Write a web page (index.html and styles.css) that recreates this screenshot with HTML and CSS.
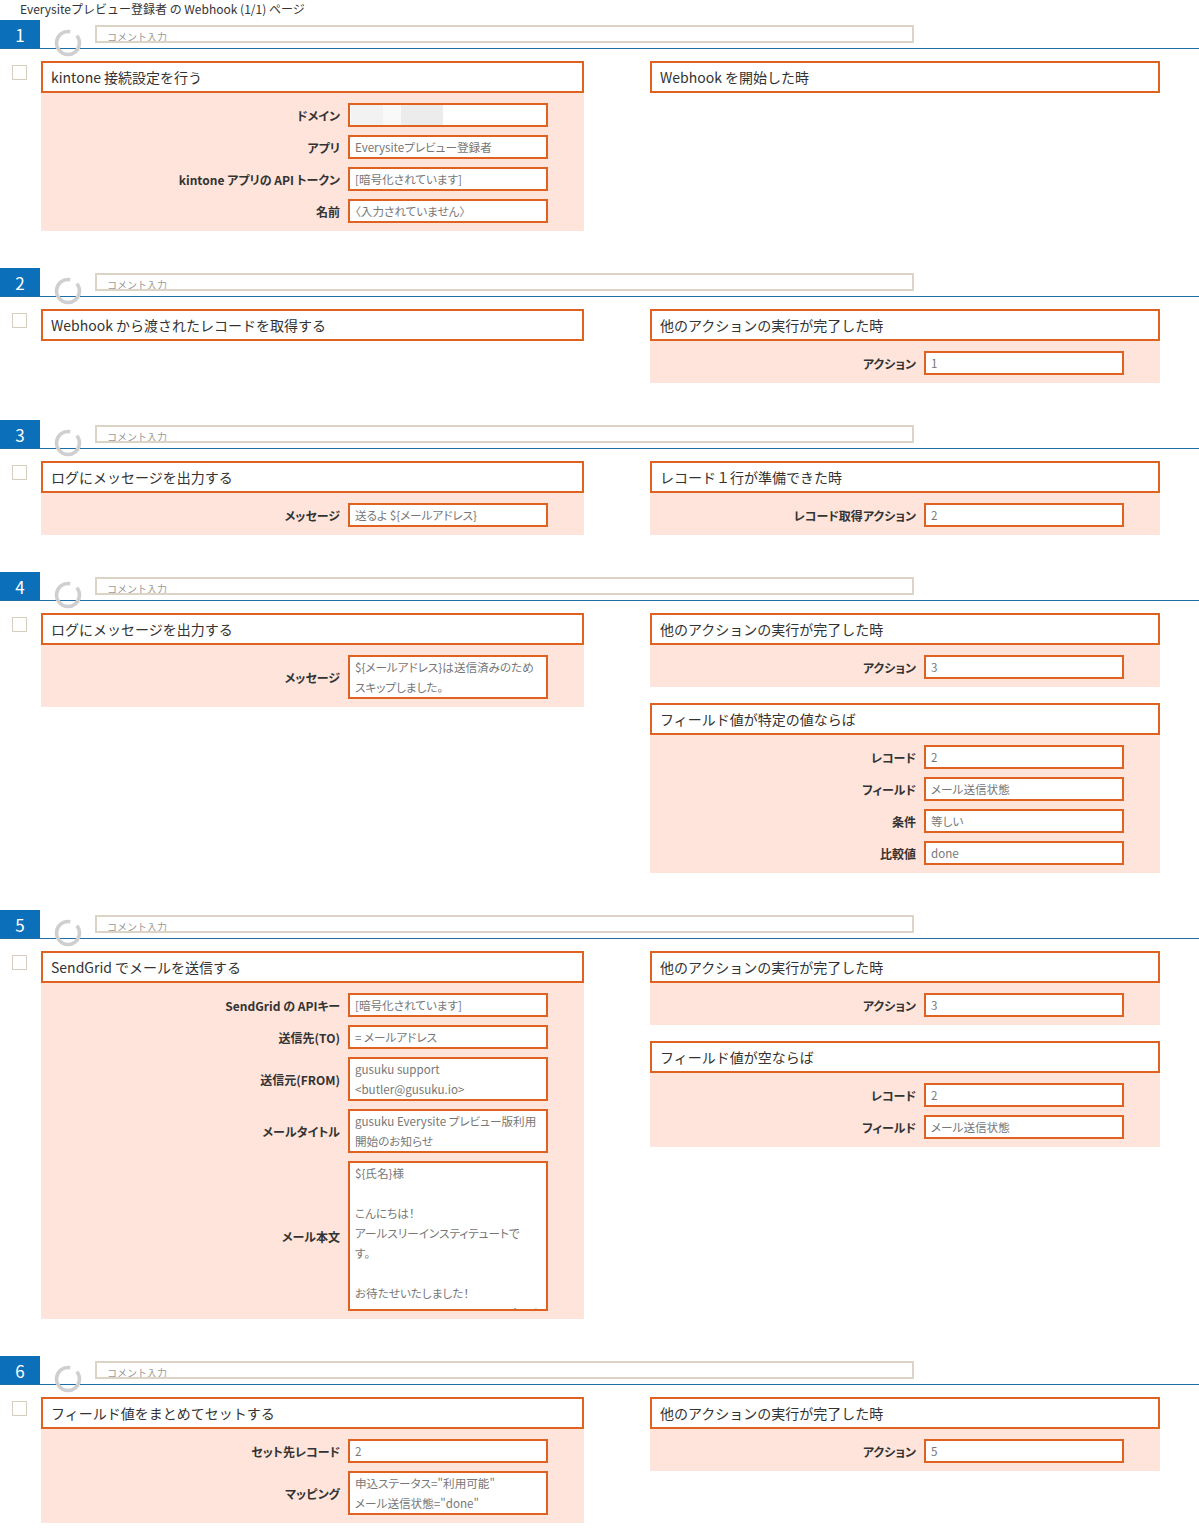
FILE: index.html
```html
<!DOCTYPE html>
<html lang="ja">
<head>
<meta charset="utf-8">
<title>Everysiteプレビュー登録者 の Webhook (1/1) ページ</title>
<link rel="stylesheet" href="styles.css">
</head>
<body>
<div class="page-title">Everysiteプレビュー登録者 の Webhook (1/1) ページ</div>

<section class="step">
  <div class="step-head">
    <div class="step-no">1</div>
    <svg class="spinner" viewBox="0 0 28 28" width="28" height="28"><circle cx="14" cy="14" r="11.5" fill="none" stroke="#cfcfcf" stroke-width="3.5" stroke-dasharray="64 8.3" transform="rotate(-40 14 14)"/></svg>
    <div class="comment">コメント入力</div>
  </div>
  <div class="step-body">
    <span class="check"></span>
    <div class="col col-action">
      <div class="card">
        <div class="card-title">kintone 接続設定を行う</div>
        <div class="card-body">
          <div class="row"><span class="label">ドメイン</span><span class="field"><span class="blur"></span></span></div>
          <div class="row"><span class="label">アプリ</span><span class="field">Everysiteプレビュー登録者</span></div>
          <div class="row"><span class="label">kintone アプリの API トークン</span><span class="field">[暗号化されています]</span></div>
          <div class="row"><span class="label">名前</span><span class="field">〈入力されていません〉</span></div>
        </div>
      </div>
    </div>
    <div class="col col-trigger">
      <div class="card">
        <div class="card-title">Webhook を開始した時</div>
      </div>
    </div>
  </div>
</section>

<section class="step">
  <div class="step-head">
    <div class="step-no">2</div>
    <svg class="spinner" viewBox="0 0 28 28" width="28" height="28"><circle cx="14" cy="14" r="11.5" fill="none" stroke="#cfcfcf" stroke-width="3.5" stroke-dasharray="64 8.3" transform="rotate(-40 14 14)"/></svg>
    <div class="comment">コメント入力</div>
  </div>
  <div class="step-body">
    <span class="check"></span>
    <div class="col col-action">
      <div class="card">
        <div class="card-title">Webhook から渡されたレコードを取得する</div>
      </div>
    </div>
    <div class="col col-trigger">
      <div class="card">
        <div class="card-title">他のアクションの実行が完了した時</div>
        <div class="card-body">
          <div class="row"><span class="label">アクション</span><span class="field">1</span></div>
        </div>
      </div>
    </div>
  </div>
</section>

<section class="step">
  <div class="step-head">
    <div class="step-no">3</div>
    <svg class="spinner" viewBox="0 0 28 28" width="28" height="28"><circle cx="14" cy="14" r="11.5" fill="none" stroke="#cfcfcf" stroke-width="3.5" stroke-dasharray="64 8.3" transform="rotate(-40 14 14)"/></svg>
    <div class="comment">コメント入力</div>
  </div>
  <div class="step-body">
    <span class="check"></span>
    <div class="col col-action">
      <div class="card">
        <div class="card-title">ログにメッセージを出力する</div>
        <div class="card-body">
          <div class="row"><span class="label">メッセージ</span><span class="field">送るよ ${メールアドレス}</span></div>
        </div>
      </div>
    </div>
    <div class="col col-trigger">
      <div class="card">
        <div class="card-title">レコード１行が準備できた時</div>
        <div class="card-body">
          <div class="row"><span class="label">レコード取得アクション</span><span class="field">2</span></div>
        </div>
      </div>
    </div>
  </div>
</section>

<section class="step">
  <div class="step-head">
    <div class="step-no">4</div>
    <svg class="spinner" viewBox="0 0 28 28" width="28" height="28"><circle cx="14" cy="14" r="11.5" fill="none" stroke="#cfcfcf" stroke-width="3.5" stroke-dasharray="64 8.3" transform="rotate(-40 14 14)"/></svg>
    <div class="comment">コメント入力</div>
  </div>
  <div class="step-body">
    <span class="check"></span>
    <div class="col col-action">
      <div class="card">
        <div class="card-title">ログにメッセージを出力する</div>
        <div class="card-body">
          <div class="row"><span class="label">メッセージ</span><span class="field lines">${メールアドレス}は送信済みのため
スキップしました。</span></div>
        </div>
      </div>
    </div>
    <div class="col col-trigger">
      <div class="card">
        <div class="card-title">他のアクションの実行が完了した時</div>
        <div class="card-body">
          <div class="row"><span class="label">アクション</span><span class="field">3</span></div>
        </div>
      </div>
      <div class="card">
        <div class="card-title">フィールド値が特定の値ならば</div>
        <div class="card-body">
          <div class="row"><span class="label">レコード</span><span class="field">2</span></div>
          <div class="row"><span class="label">フィールド</span><span class="field">メール送信状態</span></div>
          <div class="row"><span class="label">条件</span><span class="field">等しい</span></div>
          <div class="row"><span class="label">比較値</span><span class="field">done</span></div>
        </div>
      </div>
    </div>
  </div>
</section>

<section class="step">
  <div class="step-head">
    <div class="step-no">5</div>
    <svg class="spinner" viewBox="0 0 28 28" width="28" height="28"><circle cx="14" cy="14" r="11.5" fill="none" stroke="#cfcfcf" stroke-width="3.5" stroke-dasharray="64 8.3" transform="rotate(-40 14 14)"/></svg>
    <div class="comment">コメント入力</div>
  </div>
  <div class="step-body">
    <span class="check"></span>
    <div class="col col-action">
      <div class="card">
        <div class="card-title">SendGrid でメールを送信する</div>
        <div class="card-body">
          <div class="row"><span class="label">SendGrid の APIキー</span><span class="field">[暗号化されています]</span></div>
          <div class="row"><span class="label">送信先(TO)</span><span class="field">= メールアドレス</span></div>
          <div class="row"><span class="label">送信元(FROM)</span><span class="field lines">gusuku support
&lt;butler@gusuku.io&gt;</span></div>
          <div class="row"><span class="label">メールタイトル</span><span class="field lines">gusuku Everysite プレビュー版利用
開始のお知らせ</span></div>
          <div class="row"><span class="label">メール本文</span><span class="field lines tall">${氏名}様

こんにちは！
アールスリーインスティテュートで
す。

お待たせいたしました！
　　　　　　　　　　　　　プレビュー版を</span></div>
        </div>
      </div>
    </div>
    <div class="col col-trigger">
      <div class="card">
        <div class="card-title">他のアクションの実行が完了した時</div>
        <div class="card-body">
          <div class="row"><span class="label">アクション</span><span class="field">3</span></div>
        </div>
      </div>
      <div class="card">
        <div class="card-title">フィールド値が空ならば</div>
        <div class="card-body">
          <div class="row"><span class="label">レコード</span><span class="field">2</span></div>
          <div class="row"><span class="label">フィールド</span><span class="field">メール送信状態</span></div>
        </div>
      </div>
    </div>
  </div>
</section>

<section class="step">
  <div class="step-head">
    <div class="step-no">6</div>
    <svg class="spinner" viewBox="0 0 28 28" width="28" height="28"><circle cx="14" cy="14" r="11.5" fill="none" stroke="#cfcfcf" stroke-width="3.5" stroke-dasharray="64 8.3" transform="rotate(-40 14 14)"/></svg>
    <div class="comment">コメント入力</div>
  </div>
  <div class="step-body">
    <span class="check"></span>
    <div class="col col-action">
      <div class="card">
        <div class="card-title">フィールド値をまとめてセットする</div>
        <div class="card-body">
          <div class="row"><span class="label">セット先レコード</span><span class="field">2</span></div>
          <div class="row"><span class="label">マッピング</span><span class="field lines">申込ステータス="利用可能"
メール送信状態="done"</span></div>
        </div>
      </div>
    </div>
    <div class="col col-trigger">
      <div class="card">
        <div class="card-title">他のアクションの実行が完了した時</div>
        <div class="card-body">
          <div class="row"><span class="label">アクション</span><span class="field">5</span></div>
        </div>
      </div>
    </div>
  </div>
</section>
</body>
</html>
```

FILE: styles.css
```css
body {
  margin: 0;
  font-family: "Noto Sans CJK JP", "Noto Sans", sans-serif;
  color: #333;
  background: #fff;
}

.page-title {
  height: 20px;
  padding-left: 20px;
  font-size: 12px;
  line-height: 17px;
  color: #333;
}

.step {
  margin-bottom: 37px;
}

.step-head {
  display: flex;
  align-items: flex-start;
  height: 28px;
  border-bottom: 1px solid #1f6ca6;
}

.step-no {
  flex-shrink: 0;
  width: 40px;
  height: 28px;
  background: #0b6fba;
  color: #fff;
  font-size: 17px;
  line-height: 30px;
  text-align: center;
}

.spinner {
  flex-shrink: 0;
  margin: 9px 0 0 14px;
  overflow: visible;
}

.comment {
  flex-shrink: 0;
  box-sizing: border-box;
  width: 819px;
  height: 18px;
  margin: 5px 0 0 13px;
  padding: 3px 0 0 10px;
  border: 2px solid #ddd3c7;
  font-size: 10px;
  line-height: 14px;
  color: #999;
  overflow: hidden;
}

.step-body {
  display: flex;
  align-items: flex-start;
  padding-left: 12px;
  margin-top: 12px;
}

.check {
  flex-shrink: 0;
  box-sizing: border-box;
  width: 15px;
  height: 15px;
  margin: 4px 14px 0 0;
  border: 1px solid #d6ccc0;
  background: #fff;
}

.col {
  display: flex;
  flex-direction: column;
  gap: 16px;
  flex-shrink: 0;
}

.col-action {
  width: 543px;
  margin-right: 66px;
}

.col-trigger {
  width: 510px;
}

.card-title {
  box-sizing: border-box;
  height: 32px;
  padding: 0 8px;
  border: 2px solid #df6221;
  background: #fff;
  font-size: 14px;
  line-height: 29px;
  color: #333;
  white-space: nowrap;
}

.card-body {
  display: flex;
  flex-direction: column;
  gap: 8px;
  padding: 10px 0 8px;
  background: #fee4db;
}

.row {
  display: flex;
  align-items: center;
}

.label {
  flex-shrink: 0;
  margin-right: 8px;
  font-size: 12px;
  font-weight: bold;
  text-align: right;
  color: #333;
  font-feature-settings: "palt";
  white-space: nowrap;
}

.col-action .label {
  width: 299px;
}

.col-trigger .label {
  width: 266px;
}

.field {
  display: block;
  box-sizing: border-box;
  width: 200px;
  min-height: 24px;
  padding: 0 5px;
  border: 2px solid #df6221;
  background: #fff;
  font-size: 11.6px;
  line-height: 20px;
  color: #777;
  font-feature-settings: "palt";
  white-space: nowrap;
  overflow: hidden;
}

.field.lines {
  white-space: pre;
}

.field.tall {
  height: 150px;
}

.blur {
  display: block;
  width: 92px;
  height: 20px;
  margin-left: -4px;
  background: linear-gradient(to right, #f2f2f2 0 32px, #f9f9f9 32px 50px, #ececec 50px 92px);
}
```
